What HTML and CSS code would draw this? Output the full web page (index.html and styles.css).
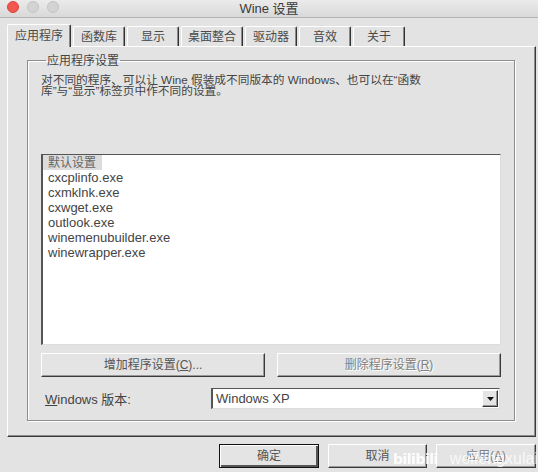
FILE: index.html
```html
<!DOCTYPE html>
<html lang="zh">
<head>
<meta charset="utf-8">
<title>Wine 设置</title>
<link rel="stylesheet" href="styles.css">
</head>
<body>
<div class="window">
  <div class="titlebar">
    <div class="lights">
      <span class="light red"></span>
      <span class="light gray"></span>
      <span class="light gray"></span>
    </div>
    <div class="title">Wine 设置</div>
  </div>

  <div class="tabs">
    <div class="tab selected">应用程序</div>
    <div class="tab">函数库</div>
    <div class="tab">显示</div>
    <div class="tab">桌面整合</div>
    <div class="tab">驱动器</div>
    <div class="tab">音效</div>
    <div class="tab">关于</div>
  </div>

  <div class="panel">
    <fieldset class="group">
      <legend class="legend">应用程序设置</legend>
      <p class="desc">对不同的程序、可以让 Wine 假装成不同版本的 Windows、也可以在“函数<br>库”与“显示”标签页中作不同的设置。</p>
      <div class="listbox">
        <div class="item default"><span class="hl">默认设置</span></div>
        <div class="item">cxcplinfo.exe</div>
        <div class="item">cxmklnk.exe</div>
        <div class="item">cxwget.exe</div>
        <div class="item">outlook.exe</div>
        <div class="item">winemenubuilder.exe</div>
        <div class="item">winewrapper.exe</div>
      </div>
      <div class="btnrow">
        <div class="btn wide">增加程序设置(<u>C</u>)...</div>
        <div class="btn wide disabled">删除程序设置(<u>R</u>)</div>
      </div>
      <div class="verrow">
        <div class="verlabel"><u>W</u>indows 版本:</div>
        <div class="combo">
          <span class="combotext">Windows XP</span>
          <span class="dropbtn"><svg width="7" height="4" viewBox="0 0 7 4"><polygon points="0,0 7,0 3.5,4" fill="#111"/></svg></span>
        </div>
      </div>
    </fieldset>
  </div>

  <div class="footer">
    <div class="btn foot default-btn">确定</div>
    <div class="btn foot cancel">取消</div>
    <div class="btn foot apply disabled">应用(<u>A</u>)</div>
  </div>

  <div class="watermark"><span class="bili">bilibili</span><span class="wm">weifengxulai</span></div>
</div>
</body>
</html>
```

FILE: styles.css
```css
* { box-sizing: border-box; }
html, body {
  margin: 0;
  padding: 0;
  background: #e3e3e3;
}
body {
  width: 538px;
  height: 472px;
  overflow: hidden;
  font-family: "Liberation Sans", "Noto Sans CJK SC", sans-serif;
  color: #444;
}
.window {
  position: relative;
  width: 538px;
  height: 472px;
}
.titlebar {
  position: relative;
  height: 18px;
  background: linear-gradient(#ebebeb, #d9d9d9);
  border-bottom: 1px solid #b4b4b4;
  display: flex;
  align-items: center;
  justify-content: center;
}
.lights {
  position: absolute;
  left: 7px;
  top: 1px;
  display: flex;
  gap: 8px;
}
.light {
  width: 12px;
  height: 12px;
  border-radius: 50%;
  display: block;
}
.light.red { background: #f2564f; border: 1px solid #dd453f; }
.light.gray { background: #d3d3d3; border: 1px solid #c4c4c4; }
.title {
  font-size: 13px;
  color: #3a3a3a;
  line-height: 17px;
  font-family: "Liberation Sans", "Noto Sans CJK SC", sans-serif;
  margin-top: -1px;
}

.tabs {
  display: flex;
  align-items: flex-end;
  height: 22px;
  margin-top: 6px;
  margin-left: 7px;
  gap: 2px;
  position: relative;
  z-index: 1;
}
.tab {
  min-width: 52px;
  height: 20px;
  padding: 0 6px;
  text-align: center;
  font-size: 12px;
  line-height: 18px;
  font-family: "Noto Sans CJK SC", sans-serif;
  color: #4a4a4a;
  border-top: 1px solid #fff;
  border-left: 1px solid #fff;
  border-right: 1px solid #333;
  box-shadow: inset -1px 0 0 #8a8a8a;
  border-radius: 2px 2px 0 0;
  background: #e3e3e3;
}
.tab.selected {
  height: 23px;
  margin-bottom: -1px;
  min-width: 64px;
  padding-top: 1px;
}

.panel {
  margin-left: 7px;
  width: 529px;
  height: 391px;
  border-top: 1px solid #fff;
  border-left: 1px solid #fff;
  border-right: 1px solid #3a3a3a;
  border-bottom: 1px solid #3a3a3a;
  box-shadow: inset -1px -1px 0 #8c8c8c;
  padding: 6px 0 0 19px;
}

.group {
  margin: 0;
  width: 488px;
  padding: 7px 13px 11px 13px;
  border: 1px solid #8c8c8c;
  box-shadow: 1px 1px 0 #fff, inset 1px 1px 0 #fff;
}
.legend {
  font-family: "Noto Sans CJK SC", sans-serif;
  font-size: 12px;
  line-height: 14px;
  padding: 0 1px;
  margin-left: 5px;
  color: #444;
}
.desc {
  margin: 0 0 58px 0;
  font-size: 11.7px;
  line-height: 11px;
  color: #444;
}

.listbox {
  width: 460px;
  height: 191px;
  background: #fff;
  border-top: 1px solid #555;
  border-left: 2px solid #555;
  border-right: 1px solid #ddd;
  border-bottom: 1px solid #ddd;
  overflow: hidden;
}
.item {
  font-size: 13px;
  line-height: 15px;
  height: 15px;
  padding-left: 5px;
  color: #444;
  white-space: nowrap;
}
.item.default { padding-left: 0; }
.hl {
  display: inline-block;
  vertical-align: top;
  height: 15px;
  line-height: 14px;
  background: #dcdcdc;
  padding: 0 6px 0 5px;
  font-size: 12px;
  font-family: "Noto Sans CJK SC", sans-serif;
  color: #666;
}

.btnrow {
  display: flex;
  gap: 12px;
  margin-top: 8px;
}
.btn {
  height: 24px;
  background: #e4e4e4;
  border-top: 1px solid #fff;
  border-left: 1px solid #fff;
  border-right: 1px solid #3a3a3a;
  border-bottom: 1px solid #3a3a3a;
  box-shadow: inset -1px -1px 0 #999;
  text-align: center;
  font-size: 12px;
  line-height: 22px;
  color: #555;
  font-family: "Liberation Sans", "Noto Sans CJK SC", sans-serif;
}
.btn.wide { width: 224px; }
.btn.disabled {
  color: #808080;
  text-shadow: 1px 1px 0 #fff;
}

.verrow {
  display: flex;
  align-items: center;
  margin-top: 11px;
  height: 21px;
}
.verlabel {
  width: 170px;
  padding-left: 4px;
  font-size: 13px;
  color: #444;
  font-family: "Liberation Sans", "Noto Sans CJK SC", sans-serif;
}
.combo {
  width: 289px;
  height: 21px;
  background: #fff;
  border-top: 1px solid #555;
  border-left: 2px solid #555;
  border-right: 1px solid #ddd;
  border-bottom: 1px solid #ddd;
  display: flex;
  align-items: center;
  justify-content: space-between;
  padding-right: 1px;
}
.combotext {
  font-size: 13px;
  padding-left: 3px;
  color: #444;
}
.dropbtn {
  width: 16px;
  height: 17px;
  background: #e4e4e4;
  border-top: 1px solid #fff;
  border-left: 1px solid #fff;
  border-right: 1px solid #333;
  border-bottom: 1px solid #333;
  box-shadow: inset -1px -1px 0 #999;
  display: flex;
  align-items: center;
  justify-content: center;
}

.footer {
  display: flex;
  justify-content: flex-end;
  gap: 9px;
  margin-top: 7px;
  margin-right: 2px;
}
.btn.foot { width: 100px; }
.btn.cancel { width: 99px; }
.btn.default-btn {
  border: 1px solid #111;
  box-shadow: inset 1px 1px 0 #fff, inset -2px -2px 0 #555;
  color: #555;
}

.watermark {
  position: absolute;
  left: 393px;
  top: 448px;
  display: flex;
  align-items: flex-end;
  gap: 12px;
  color: #fff;
  opacity: 0.9;
}
.bili {
  font-family: "DejaVu Sans", sans-serif;
  font-weight: bold;
  font-size: 14px;
  letter-spacing: -0.5px;
  line-height: 22px;
}
.wm {
  font-family: "Liberation Sans", sans-serif;
  font-size: 16px;
  line-height: 22px;
  opacity: 0.8;
}
```
